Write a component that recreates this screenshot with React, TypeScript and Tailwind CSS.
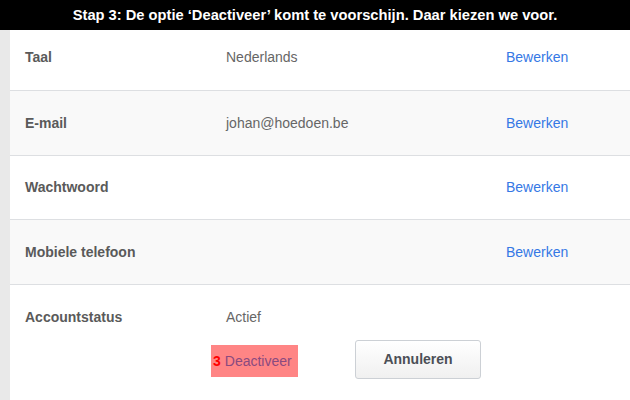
const ROWS = [
  { label: "Taal", value: "Nederlands", bg: "bg-white" },
  { label: "E-mail", value: "johan@hoedoen.be", bg: "bg-[#f9f9f9]" },
  { label: "Wachtwoord", value: "", bg: "bg-white" },
  { label: "Mobiele telefoon", value: "", bg: "bg-[#f9f9f9]" },
];

export default function App() {
  return (
    <div className="w-[630px] h-[400px] overflow-hidden bg-white font-['Liberation_Sans',Arial,sans-serif] text-[14px]">
      {/* caption bar */}
      <div className="h-[30px] bg-black flex items-center justify-center text-white font-bold text-[14.7px]">
        Stap 3: De optie ‘Deactiveer’ komt te voorschijn. Daar kiezen we voor.
      </div>

      <div className="flex h-[370px]">
        <div className="w-[10px] bg-[#e9e9e9] shrink-0" />

        <div className="flex-1 flex flex-col">
          {ROWS.map((row, i) => (
            <div
              key={row.label}
              className={`grid grid-cols-[201px_280px_1fr] items-center pl-[15px] border-b border-[#dddfe2] ${row.bg} ${
                i === 0 ? "h-[61px] pb-[6px]" : i === 2 ? "h-[64px]" : "h-[65px]"
              }`}
            >
              <span className="font-bold text-[#5a5a5a]">{row.label}</span>
              <span className="text-[#666]">{row.value}</span>
              <span className="text-[#3578e5]">Bewerken</span>
            </div>
          ))}

          {/* account status */}
          <div className="pt-[23px]">
            <div className="grid grid-cols-[201px_1fr] items-center pl-[15px] leading-[18px]">
              <span className="font-bold text-[#5a5a5a]">Accountstatus</span>
              <span className="text-[#666]">Actief</span>
            </div>
            <div className="flex items-center pl-[201px] mt-[14px]">
              <div className="w-[87px] h-[32px] mt-[3px] bg-[#ff8585] flex items-center px-[2px]">
                <span className="font-bold text-[#ff0000]">3</span>
                <span className="ml-[4px] text-[#8a4a80]">Deactiveer</span>
              </div>
              <button className="ml-[57px] w-[126px] h-[39px] rounded-[3px] border border-[#ccd0d5] bg-gradient-to-b from-white to-[#f0f0f0] font-bold text-[#4b4f56]">
                Annuleren
              </button>
            </div>
          </div>
        </div>
      </div>
    </div>
  );
}
